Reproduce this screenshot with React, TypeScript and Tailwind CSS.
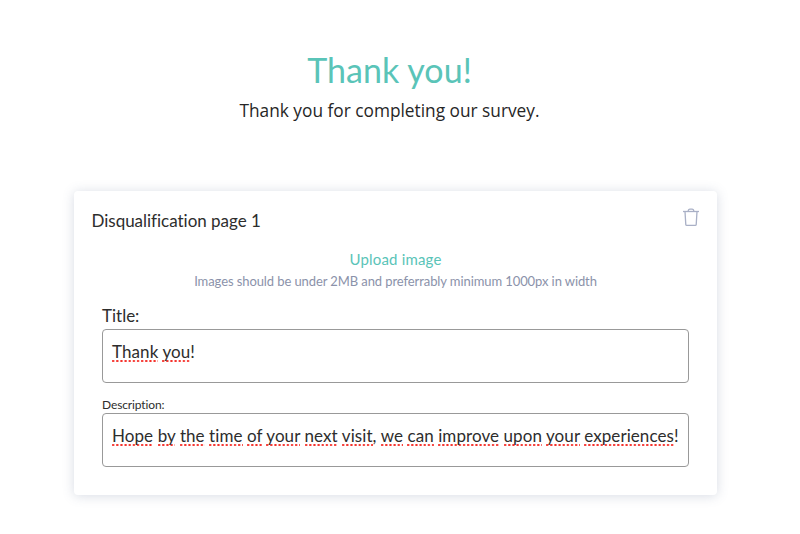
import { Fragment } from "react";

// Text whose words carry the browser's spelling marks; closing punctuation stays unmarked.
function SpellChecked({ text }: { text: string }) {
  return (
    <>
      {text.split(" ").map((word, i) => {
        const bare = word.replace(/[!,]$/, "");
        return (
          <Fragment key={i}>
            {i > 0 && " "}
            <span className="bg-[radial-gradient(circle_at_1.2px_1.2px,#f5302a_0.9px,transparent_1.4px)] bg-[length:4.15px_2.4px] bg-bottom-left bg-repeat-x">
              {bare}
            </span>
            {word.slice(bare.length)}
          </Fragment>
        );
      })}
    </>
  );
}

function Field({ text }: { text: string }) {
  return (
    <div className="h-[54px] w-[587px] rounded-[4px] border border-[#999] bg-white pl-[9px] pt-[11px] text-[17px] leading-[22px] tracking-[0.08px] whitespace-nowrap">
      <SpellChecked text={text} />
    </div>
  );
}

function TrashIcon() {
  return (
    <svg width="16" height="19" viewBox="0 0 16 19" fill="none" stroke="#a9b0c6" strokeWidth="1.3">
      <path d="M0 3.5H16" />
      <path d="M2 3.5L2.8 16.6Q2.9 17.4 3.8 17.4H12.2Q13.1 17.4 13.2 16.6L14 3.5" />
      <path d="M5.2 3.3Q5.3 1.2 7 1.2H9Q10.7 1.2 10.8 3.3" />
    </svg>
  );
}

export default function App() {
  return (
    <main className="flex h-[534px] w-[800px] flex-col overflow-hidden bg-white font-['Lato','Liberation_Sans',sans-serif] text-[#2d2d2d]">
      <header className="flex w-[779px] flex-col items-center pt-[50px]">
        <h1 className="text-[34px] leading-[40px] tracking-[0.05px] text-[#5ac4b8]">Thank you!</h1>
        <p className="mt-[9px] font-['Open_Sans','Noto_Sans',sans-serif] text-[17.3px] leading-6 text-[#262626]">
          Thank you for completing our survey.
        </p>
      </header>
      <section className="mt-[68px] ml-[74px] h-[304px] w-[643px] rounded-[4px] bg-white pt-[17px] shadow-[0_1px_12px_rgba(75,90,130,0.22)]">
        <div className="flex h-[42px] justify-between pr-[18px] pl-[17.5px]">
          <h2 className="pt-[2px] text-[17px] leading-[22px] tracking-[-0.02px]">Disqualification page 1</h2>
          <TrashIcon />
        </div>
        <div className="flex flex-col items-center">
          <button className="text-[15px] leading-[18px] tracking-[0.18px] text-[#5ac4b8]">Upload image</button>
          <p className="mt-[4px] text-[13px] leading-[18px] tracking-[-0.09px] text-[#8b92aa]">
            Images should be under 2MB and preferrably minimum 1000px in width
          </p>
        </div>
        <div className="mt-[14px] ml-[28px]">
          <label className="mb-px block text-[17px] leading-[24px] tracking-[-0.01px]">Title:</label>
          <Field text="Thank you!" />
          <label className="mt-[14px] block text-[12px] leading-4 tracking-[-0.12px]">Description:</label>
          <Field text="Hope by the time of your next visit, we can improve upon your experiences!" />
        </div>
      </section>
    </main>
  );
}
